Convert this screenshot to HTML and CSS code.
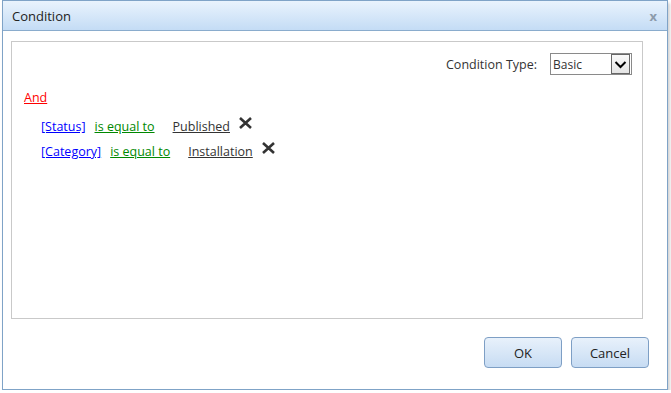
FILE: index.html
```html
<!DOCTYPE html>
<html>
<head>
    <meta charset="UTF-8">
    <title>Condition</title>
    <link rel="stylesheet" href="styles.css">
</head>
<body>
    <div class="dialog">
        <div class="title-bar">
            <span class="title">Condition</span>
            <span class="close">x</span>
        </div>

        <div class="dialog-body">
            <div class="panel">
                <div class="type-row">
                    <label for="conditionType">Condition Type:</label>
                    <div class="select">
                        <span class="select-value">Basic</span>
                        <span class="select-arrow">
                            <svg width="13" height="9" viewBox="0 0 13 9"><path d="M1.5 2 L6.5 7 L11.5 2" fill="none" stroke="#000" stroke-width="2"/></svg>
                        </span>
                    </div>
                </div>

                <a class="op" href="#">And</a>

                <div class="rules">
                    <div class="rule">
                        <a class="field" href="#">[Status]</a>
                        <a class="cmp" href="#">is equal to</a>
                        <a class="val" href="#">Published</a>
                        <span class="remove">
                            <svg width="15" height="14" viewBox="0 0 15 14"><path d="M2 2 L13 12 M13 2 L2 12" stroke="#333" stroke-width="2.6"/></svg>
                        </span>
                    </div>
                    <div class="rule">
                        <a class="field" href="#">[Category]</a>
                        <a class="cmp" href="#">is equal to</a>
                        <a class="val" href="#">Installation</a>
                        <span class="remove">
                            <svg width="15" height="14" viewBox="0 0 15 14"><path d="M2 2 L13 12 M13 2 L2 12" stroke="#333" stroke-width="2.6"/></svg>
                        </span>
                    </div>
                </div>
            </div>

            <div class="buttons">
                <button class="btn">OK</button>
                <button class="btn">Cancel</button>
            </div>
        </div>
    </div>
</body>
</html>
```

FILE: styles.css
```css
body {
    margin: 0;
    background: #ffffff;
    font-family: 'Open Sans', 'Noto Sans', sans-serif;
    font-size: 12px;
    color: #333;
}

.dialog {
    width: 664px;
    height: 388px;
    margin-left: 2px;
    border: 1px solid #7fa3c7;
    background: #fff;
    box-shadow: 2px 3px 3px rgba(0, 0, 0, 0.18);
    display: flex;
    flex-direction: column;
}

.title-bar {
    height: 29px;
    border-bottom: 1px solid #8aaccd;
    background: linear-gradient(#e9f3fd, #c4dcf5);
    display: flex;
    align-items: center;
    justify-content: space-between;
    padding: 0 10px 0 9px;
}

.title {
    font-size: 13px;
    color: #222;
}

.close {
    font-size: 13px;
    font-weight: bold;
    color: #8c9bab;
}

.dialog-body {
    padding: 10px 0 0 8px;
}

.panel {
    width: 630px;
    height: 276px;
    border: 1px solid #c9c9c9;
}

.type-row {
    display: flex;
    justify-content: flex-end;
    align-items: center;
    gap: 13px;
    padding: 11px 10px 0 0;
}

.type-row label {
    font-size: 12.5px;
}

.select {
    width: 80px;
    height: 20px;
    border: 1px solid #8a8a8a;
    display: flex;
    align-items: center;
    justify-content: space-between;
}

.select-value {
    padding-left: 2px;
}

.select-arrow {
    width: 17px;
    height: 18px;
    margin-right: 1px;
    border: 1px solid #666;
    background: linear-gradient(#fafafa, #e4e4e4);
    display: flex;
    align-items: center;
    justify-content: center;
}

.op {
    display: inline-block;
    margin: 14px 0 0 12px;
    font-size: 12.5px;
    color: #f00;
}

.rules {
    margin-top: 8px;
    font-size: 12.5px;
}

.rule {
    display: flex;
    align-items: center;
    height: 25px;
    padding-left: 29px;
}

.field {
    color: #00f;
    margin-right: 9px;
}

.cmp {
    color: #080;
    margin-right: 18px;
}

.val {
    color: #333;
    margin-right: 8px;
}

.remove {
    display: flex;
    margin-top: -8px;
}

.buttons {
    display: flex;
    justify-content: flex-end;
    gap: 9px;
    padding: 18px 18px 0 0;
}

.btn {
    width: 78px;
    height: 31px;
    border: 1px solid #7e9fc5;
    border-radius: 4px;
    background: linear-gradient(#e8f1fb, #c7dcf3);
    font-family: 'Open Sans', 'Noto Sans', sans-serif;
    font-size: 13px;
    color: #222;
}
```
